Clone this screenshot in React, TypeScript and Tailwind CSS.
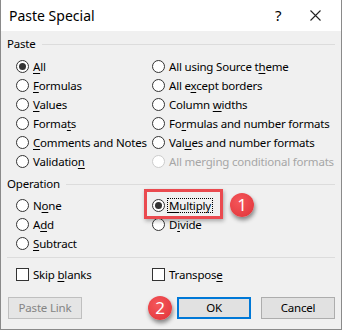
import React from 'react';

type Opt = { pre: string; key?: string; post?: string; on?: boolean; off?: boolean };

const font = { fontFamily: '"Noto Sans", "Segoe UI", sans-serif' };

function Label({ o }: { o: Opt }) {
  return (
    <span className={`whitespace-nowrap ${o.off ? 'text-[#a6a6a6]' : 'text-black'}`}>
      {o.pre}
      {o.key && <span className="underline underline-offset-2">{o.key}</span>}
      {o.post}
    </span>
  );
}

function Radio({ o, focus }: { o: Opt; focus?: boolean }) {
  return (
    <div className="flex h-[19px] items-center gap-[2px]">
      <span
        className={`flex h-[13px] w-[13px] shrink-0 items-center justify-center rounded-full border bg-white ${
          o.off ? 'border-[#cccccc]' : 'border-[#333333]'
        }`}
      >
        {o.on && <span className="h-[7px] w-[7px] rounded-full bg-[#333333]" />}
      </span>
      <span
        className={
          focus ? 'border border-dotted border-black px-[1px] leading-[13px]' : 'border border-transparent px-[1px]'
        }
      >
        <Label o={o} />
      </span>
    </div>
  );
}

function Check({ o }: { o: Opt }) {
  return (
    <div className="flex h-[19px] items-center gap-[4px]">
      <span className="h-[13px] w-[13px] shrink-0 border border-[#333333] bg-white" />
      <Label o={o} />
    </div>
  );
}

function Group({ title }: { title: string }) {
  return (
    <div className="flex h-[16px] items-center gap-[6px]">
      <span>{title}</span>
      <span className="h-px flex-1 bg-[#dcdcdc]" />
    </div>
  );
}

function Badge({ n, className }: { n: string; className: string }) {
  return (
    <span
      className={`absolute flex h-[24px] w-[24px] items-center justify-center rounded-full bg-[radial-gradient(circle_at_40%_35%,#f5575b,#e03338)] text-[17px] text-white shadow-[1px_3px_4px_rgba(0,0,0,0.45)] ${className}`}
    >
      {n}
    </span>
  );
}

const pasteLeft: Opt[] = [
  { pre: '', key: 'A', post: 'll', on: true },
  { pre: '', key: 'F', post: 'ormulas' },
  { pre: '', key: 'V', post: 'alues' },
  { pre: 'Forma', key: 't', post: 's' },
  { pre: '', key: 'C', post: 'omments and Notes' },
  { pre: 'Validatio', key: 'n' },
];

const pasteRight: Opt[] = [
  { pre: 'All using Source t', key: 'h', post: 'eme' },
  { pre: 'All e', key: 'x', post: 'cept borders' },
  { pre: 'Column ', key: 'w', post: 'idths' },
  { pre: 'Fo', key: 'r', post: 'mulas and number formats' },
  { pre: 'Val', key: 'u', post: 'es and number formats' },
  { pre: 'All merging conditional formats', off: true },
];

export default function App() {
  return (
    <div
      className="flex h-[330px] w-[342px] flex-col border border-t-0 border-[#8a8a8a] bg-[#f0f0f0] text-[11.5px] tracking-[-0.2px] text-black"
      style={font}
    >
      <div className="flex h-[31px] shrink-0 items-center bg-white pl-[8px]">
        <span className="flex-1 text-[14px] tracking-normal">Paste Special</span>
        <span className="w-[14px] text-[15px] leading-none">?</span>
        <span className="flex w-[52px] justify-center">
          <svg width="11" height="11" viewBox="0 0 11 11" stroke="#222" strokeWidth="1.1">
            <path d="M0.5 0.5 L10.5 10.5 M10.5 0.5 L0.5 10.5" />
          </svg>
        </span>
      </div>

      <div className="flex flex-1 flex-col px-[6px]">
        <div className="mt-[5px]">
          <Group title="Paste" />
        </div>
        <div className="mt-[5px] grid grid-cols-[136px_1fr] pl-[9px]">
          <div>
            {pasteLeft.map((o) => (
              <Radio key={o.pre + (o.key ?? '')} o={o} />
            ))}
          </div>
          <div>
            {pasteRight.map((o) => (
              <Radio key={o.pre + (o.key ?? '')} o={o} />
            ))}
          </div>
        </div>

        <div className="mt-[5px]">
          <Group title="Operation" />
        </div>
        <div className="mt-[4px] grid grid-cols-[136px_1fr] pl-[9px]">
          <div>
            <Radio o={{ pre: 'N', key: 'o', post: 'ne' }} />
            <Radio o={{ pre: 'A', key: 'd', post: 'd' }} />
            <Radio o={{ pre: '', key: 'S', post: 'ubtract' }} />
          </div>
          <div>
            <div className="relative">
              <Radio o={{ pre: '', key: 'M', post: 'ultiply', on: true }} focus />
              <span className="absolute left-[-8px] top-[-7px] h-[30px] w-[79px] border-[3px] border-[#ea4a4f] shadow-[1px_2px_4px_rgba(0,0,0,0.3)]" />
              <Badge n="1" className="left-[78px] top-[-3px]" />
            </div>
            <Radio o={{ pre: 'D', key: 'i', post: 'vide' }} />
          </div>
        </div>

        <div className="mt-[4px] h-px bg-[#dcdcdc]" />

        <div className="mt-[7px] grid grid-cols-[136px_1fr] pl-[9px]">
          <Check o={{ pre: 'Skip ', key: 'b', post: 'lanks' }} />
          <Check o={{ pre: 'Transpos', key: 'e' }} />
        </div>

        <div className="mt-[13px] flex items-center pl-px">
          <button className="h-[22px] w-[74px] border border-[#bfbfbf] bg-[#e5e5e5] text-[#848484]">
            Paste Link
          </button>
          <div className="relative ml-[95px]">
            <Badge n="2" className="left-[-29px] top-[-1px]" />
            <button className="h-[22px] w-[74px] border-2 border-[#0078d7] bg-[#e1e1e1]">OK</button>
          </div>
          <button className="ml-[10px] h-[22px] w-[74px] border border-[#adadad] bg-[#e1e1e1]">Cancel</button>
        </div>
      </div>
    </div>
  );
}
